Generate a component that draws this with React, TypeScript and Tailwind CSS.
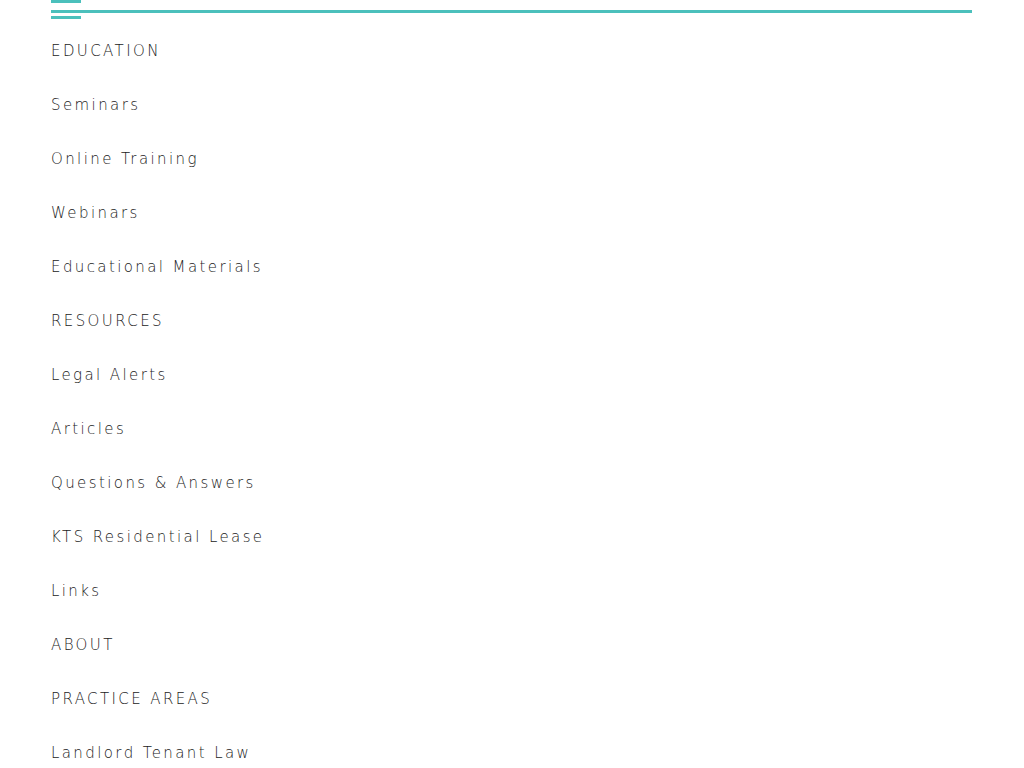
import React from "react";

const items = [
  "EDUCATION",
  "Seminars",
  "Online Training",
  "Webinars",
  "Educational Materials",
  "RESOURCES",
  "Legal Alerts",
  "Articles",
  "Questions & Answers",
  "KTS Residential Lease",
  "Links",
  "ABOUT",
  "PRACTICE AREAS",
  "Landlord Tenant Law",
];

export default function App() {
  return (
    <div className="w-[1024px] h-[768px] overflow-hidden bg-white" style={{ fontFamily: "'DejaVu Sans', sans-serif" }}>
      <div className="ml-[51px] w-[921px]">
        <div className="relative h-[19px]">
          <div className="absolute left-0 top-0 w-[30px] h-[3px] bg-[#4bc0bc]" />
          <div className="absolute left-0 top-[10px] w-[921px] h-[3px] bg-[#4bc0bc]" />
          <div className="absolute left-0 top-[16px] w-[30px] h-[3px] bg-[#4bc0bc]" />
        </div>
        <ul className="mt-[5px]">
          {items.map((t) => (
            <li key={t} className="h-[54px] flex items-center text-[15px] font-extralight tracking-[2.4px] text-[#222222]">
              {t}
            </li>
          ))}
        </ul>
      </div>
    </div>
  );
}
